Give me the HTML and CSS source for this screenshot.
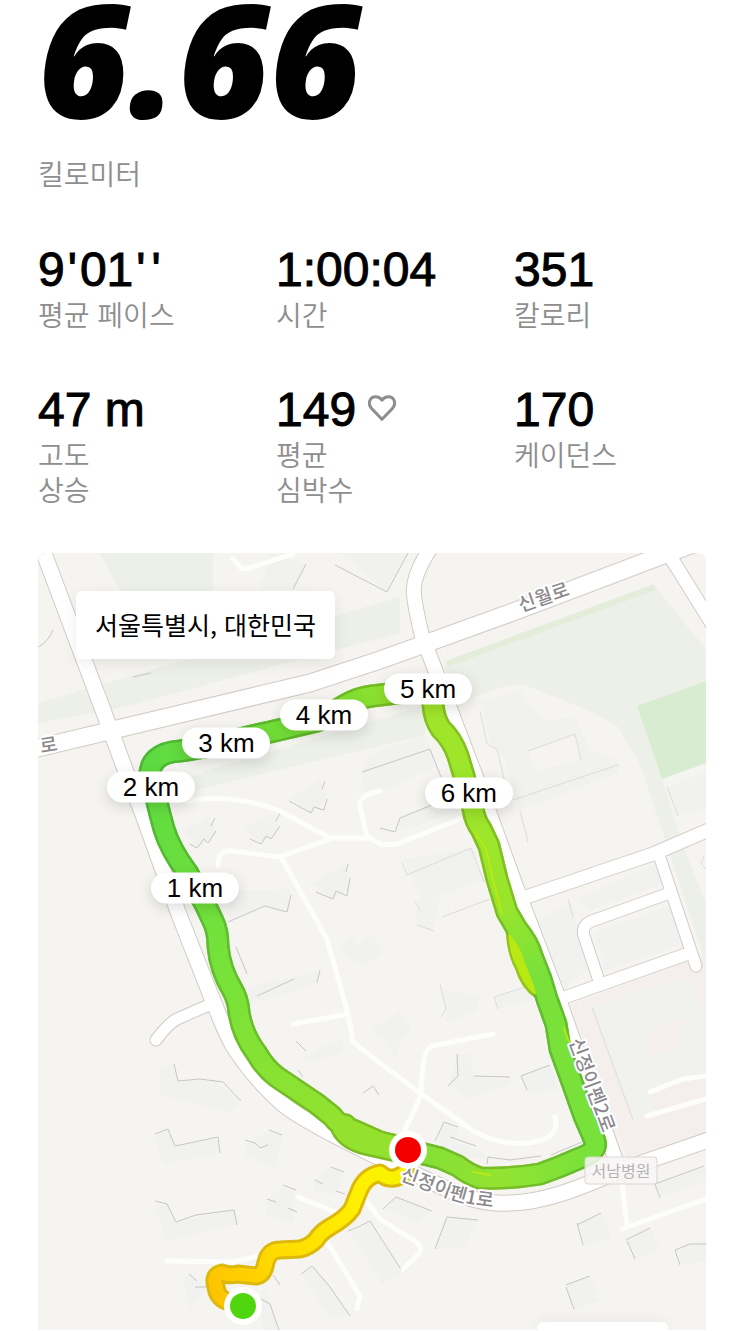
FILE: index.html
```html
<!DOCTYPE html>
<html lang="ko">
<head>
<meta charset="utf-8">
<meta name="viewport" content="width=device-width, initial-scale=1">
<title>러닝 기록</title>
<link rel="stylesheet" href="styles.css">
</head>
<body>
<main class="run">
  <header class="distance">
    <h1 class="distance-value">6.66</h1>
    <p class="label">킬로미터</p>
  </header>

  <section class="stats">
    <div class="stat"><p class="value">9<span class="mark">'</span>01<span class="mark">'</span><span class="mark">'</span></p><p class="label">평균 페이스</p></div>
    <div class="stat"><p class="value">1:00:04</p><p class="label">시간</p></div>
    <div class="stat"><p class="value">351</p><p class="label">칼로리</p></div>
    <div class="stat"><p class="value">47 m</p><p class="label">고도<br>상승</p></div>
    <div class="stat">
      <p class="value value-icon">149
        <svg class="heart" viewBox="0 0 28 26" aria-hidden="true"><path d="M14 24.300 3.600 13.500C-.6 9 1.500 1.700 7.600 1.700c2.800 0 5 1.400 6.400 3.500 1.400-2.100 3.600-3.500 6.400-3.500 6.100 0 8.200 7.300 4 11.800Z"/></svg>
      </p>
      <p class="label">평균<br>심박수</p>
    </div>
    <div class="stat"><p class="value">170</p><p class="label">케이던스</p></div>
  </section>

  <section class="map">
    <svg class="map-art" viewBox="38 554 668 777" role="img" aria-label="러닝 경로">
      <defs>
        <linearGradient id="gLeft" gradientUnits="userSpaceOnUse" x1="150" y1="770" x2="350" y2="1130">
          <stop offset="0" stop-color="#5edb42"/><stop offset=".5" stop-color="#76e239"/><stop offset="1" stop-color="#95e22e"/>
        </linearGradient>
        <linearGradient id="gTop" gradientUnits="userSpaceOnUse" x1="150" y1="750" x2="430" y2="690">
          <stop offset="0" stop-color="#5edb42"/><stop offset=".5" stop-color="#74df36"/><stop offset="1" stop-color="#98e02a"/>
        </linearGradient>
        <linearGradient id="gRight" gradientUnits="userSpaceOnUse" x1="433" y1="700" x2="590" y2="1150">
          <stop offset="0" stop-color="#a0e62a"/><stop offset=".45" stop-color="#9ae52c"/><stop offset=".62" stop-color="#7ae13a"/><stop offset="1" stop-color="#78e13a"/>
        </linearGradient>
        <linearGradient id="gBottom" gradientUnits="userSpaceOnUse" x1="590" y1="1150" x2="408" y2="1151">
          <stop offset="0" stop-color="#78e13a"/><stop offset=".5" stop-color="#93e331"/><stop offset="1" stop-color="#82df36"/>
        </linearGradient>
        <linearGradient id="gStart" gradientUnits="userSpaceOnUse" x1="212" y1="1290" x2="390" y2="1170">
          <stop offset="0" stop-color="#ffc400"/><stop offset=".35" stop-color="#ffdc00"/><stop offset=".8" stop-color="#fff000"/><stop offset="1" stop-color="#f8f200"/>
        </linearGradient>
        <g id="roads">
          <path class="w17" d="M30 751 113 731 310 684 380 661 430 643 513 613 658 558 720 535"/>
          <path class="w15" d="M38 540 45 557 109 727 126 773 142 813 178 913 211 997C222 1023 226 1036 235 1050 247 1068 265 1090 284 1106 300 1119 330 1135 384 1161L447 1190Q480 1206 508 1204 538 1204 580 1188L627 1169 720 1137"/>
          <path class="w11" d="M209 1006 177 1020Q168 1025 156 1041"/>
          <path class="w14" d="M434 540 428 553Q412 579 414 595 415 608 422 637L436 673 473 770 488 810 517 890 556 992 574 1043 616 1162"/>
          <path class="w13" d="M664 546 673 562 714 628"/>
          <path class="w13" d="M520 900 653 855 720 826"/>
          <path class="w11" d="M658 853 692 955 696 967"/>
          <path class="w12" d="M560 1000 687 955"/>
          <path class="w11" d="M599 982 584 937Q581 926 592 922L667 895"/>
        </g>
        <g id="routeGreen">
          <path stroke="url(#gBottom)" d="M594 1140Q600 1152 580 1159 560 1168 540 1175 510 1180 480 1179 468 1175 458 1167L440 1159 408 1151"/>
          <path stroke="url(#gRight)" d="M430 690 433 705Q434 720 441 730 452 740 458 757L464 777 473 810Q475 822 481 830L489 847 497 880 507 913 517 930Q529 945 532 957L541 980 547 1000 556 1025 560 1050 572 1083 584 1117 594 1140"/>
          <path stroke="url(#gTop)" d="M150 780Q148 754 180 752C215 748 235 740 270 733L317 722C335 715 347 700 372 697L430 690"/>
          <path stroke="url(#gLeft)" d="M408 1151 380 1143 353 1131Q340 1128 332 1117L317 1105 277 1078Q265 1069 257 1055 242 1035 239 1013 238 1000 232 990 220 970 218 947 218 932 213 922L205 905 187 873Q170 850 164 830 160 816 157 803L150 775"/>
        </g>
        <path id="bulge" d="M344 1128Q350 1139 368 1143L408 1152"/>
        <path id="routeYellow" d="M238 1304Q218 1304 216 1288 212 1276 222 1274 228 1277 238 1275L256 1277Q264 1276 266 1263 269 1251 280 1251L300 1250Q309 1248 316 1241 320 1234 330 1228 346 1219 352 1210L360 1190Q366 1177 380 1174 391 1185 406 1173"/>
        <path id="labelCurve" d="M385 1176Q418 1187 448 1199 472 1208 520 1210"/>
        <path id="labelSide" d="M569 1042 612 1160"/>
      </defs>

      <rect class="ground" x="38" y="554" width="668" height="777"/>

      <!-- parks and campus areas -->
      <path class="green-soft" d="M100 554H213V592H120ZM38 704 400 598V634L116 710 38 724ZM150 797 205 772 400 714 425 706V736L200 790Z"/>
      <path class="green-soft" d="M445 662 653 585 706 650V965L668 850 640 765 618 728 590 712 525 686 505 687 450 706Z"/>
      <path class="ground" d="M662 780 706 764V905L684 850Z"/>
      <path class="green-line" d="M447 665 655 588"/>
      <path class="green" d="M637 707 706 682V764L662 780Z"/>
      <path class="pink" d="M570 1006 706 955V1133L627 1158Z"/>
      <path class="building" d="M592 1008 642 991 690 977 706 1020V1100L633 1121Z"/>
      <path class="pink" d="M646 1032 682 1020 678 1050 652 1058ZM650 1090 706 1072V1104L656 1117Z"/>

      <!-- building footprints -->
      <path class="building" d="M480 702 520 692 545 722 575 718 590 750 618 762 618 774 520 812 505 760 490 745Z"/>
      <path class="ground" d="M528 752 575 735 581 761 536 772Z"/>
      <path class="building" d="M340 554H408L387 593ZM270 554 306 565 293 590 260 592ZM370 755 425 736 437 768 365 800 362 772Z"/>
      <path class="building" d="M182 832 210 818 216 832 200 850ZM243 828 275 815 280 832 262 845ZM290 800 320 780 327 800 312 815ZM311 884 345 865 350 890 333 900ZM226 892 290 890 288 913 265 907 230 922ZM240 990 318 972 317 985 250 1005Z"/>
      <path class="building" d="M400 820 442 800 460 812 395 833ZM403 860 472 850 482 880 440 897 432 932 415 925 420 895ZM535 920 572 905 588 970 565 990ZM575 900 657 865 662 885 590 912ZM595 933 670 907 682 945 605 972ZM668 788 706 772V810L678 817ZM443 990 480 998 478 1010 447 1024ZM497 998 535 985 541 1000 498 1010ZM320 1048 343 1040 343 1055 300 1063ZM340 945 352 937 358 946 372 936 385 950 376 958 365 967 350 960ZM370 1030 382 1024 400 1012 412 1030 400 1042 395 1060 386 1040Z"/>
      <path class="building" d="M160 1067 174 1065 178 1082 215 1081 240 1102 230 1113 160 1096ZM155 1137 167 1130 175 1147 218 1140 220 1155 163 1165ZM155 1207 167 1206 176 1223 235 1211 237 1225 165 1242ZM245 1147 268 1131 283 1137 275 1168 245 1157ZM312 1183 330 1168 343 1174 336 1196 315 1192ZM267 1202 283 1187 295 1192 293 1224 267 1217Z"/>
      <path class="building" d="M385 1210 398 1198 432 1212 418 1224ZM445 1218 478 1221 465 1248 435 1250ZM578 1224 602 1214 612 1240 583 1246ZM627 1242 650 1229 660 1250 635 1260ZM567 1287 590 1277 600 1302 575 1310ZM676 1250 706 1243V1262L681 1266ZM656 1186 706 1168V1182L660 1198ZM457 1055 470 1055 474 1077 515 1082 470 1100 450 1086ZM438 1140 444 1123 458 1130 455 1143 480 1152 488 1160 450 1158ZM522 1078 550 1066 558 1090 528 1094ZM302 1275 315 1267 350 1315 330 1320ZM350 1233 370 1222 402 1275 382 1285ZM262 1290 270 1300 278 1331H262ZM182 1280 192 1275 205 1290 190 1310Z"/>
      <g class="edge">
        <path d="M306 565 293 590M335 566 387 593 408 554M38 648Q48 643 53 631M133 678 151 674M362 773 380 767 430 750 441 778M380 829 395 833 400 819 432 806"/>
        <path class="thin" d="M480 712 487 745 497 750 507 792M528 752 575 735 581 761M513 801 618 766M520 812 528 843M402 863 407 876 471 849 484 883M415 902 420 912M442 918 490 900M417 926 434 932M667 788 678 817M704 857 701 865 706 870M568 900 573 918M592 1008 633 1121M440 985 446 1010 441 1018M535 985 494 998 498 1010"/>
        <path d="M215 819 211 827M216 832 208 844 204 840 197 849 190 845M280 814 276 822M280 827 271 840 266 837 261 845 250 840M325 782 322 790M327 800 324 811 314 808 311 814 289 802M348 865 346 873M350 879 347 897 336 892 333 900 316 893M228 923 265 907 287 913 291 896M257 997 294 980M317 984 320 971M236 948 247 975"/>
        <path d="M174 1065 178 1082 200 1080 223 1083 241 1102M155 1135 168 1130 175 1147 218 1138 220 1154M155 1202 167 1205 176 1223 196 1216 234 1211 237 1226M245 1141 255 1144 260 1149 268 1146M269 1131 282 1136M331 1168 344 1173M315 1181 323 1185M336 1192 345 1195M283 1186 296 1191M267 1200 276 1203M288 1209 297 1213"/>
        <path d="M383 1210 396 1198 432 1212M435 1250 447 1218 478 1221M577 1226 601 1214M577 1224 583 1246M626 1241 650 1229M627 1242 635 1260M566 1286 590 1277M566 1288 574 1310M675 1251 690 1245 706 1245M675 1251 680 1266M655 1185 704 1167M655 1185 660 1199M448 1087 458 1077 457 1055M474 1077 510 1078M527 1091 521 1077 550 1066M435 1142 444 1123 458 1128M450 1138 476 1147M487 1165 488 1158 510 1161 541 1157M551 1156 582 1143M348 1232 358 1228 370 1222 402 1272M301 1275 312 1267 330 1288 350 1317M261 1300 270 1305 279 1331M273 1276 280 1286M189 1275 197 1282M195 1288H206M298 1071 303 1078M306 1052 296 1042M363 1094 373 1087 379 1096"/>
      </g>

      <g class="paths">
        <path d="M187 802Q233 794 280 812L330 839H370L382 846 397 845 460 820M380 792Q358 796 360 808L367 838M218 867Q218 850 233 852L280 858 330 840M282 860 327 940 348 1015 353 1043 380 1064 417 1092 475 1133Q510 1151 542 1141 560 1134 555 1118M293 1025 348 1015M493 1035 432 1047Q422 1049 421 1095 418 1105 405 1130"/>
        <path d="M167 1262 233 1263 262 1256M233 1263V1280M298 1198 345 1217M365 1200 380 1220 413 1241Q424 1247 419 1255L403 1270M327 1243 360 1297 357 1310M622 1183 627 1227M622 1230 706 1200M233 560 242 570 250 569 293 555M650 1093 683 1080 706 1077M647 1117 706 1100"/>
      </g>

      <use href="#roads" class="road-case"/>
      <use href="#roads" class="road-fill"/>

      <!-- road names that sit under the route -->
      <g class="road-name">
        <text transform="translate(521 613) rotate(-19)">신월로</text>
        <text transform="translate(41 754) rotate(-9)">로</text>
      </g>

      <g class="route">
        <use href="#routeYellow" class="yellow-case"/>
        <use href="#routeYellow" class="yellow-fill"/>
        <path class="lime-case" d="M514 925Q514 951 523 967 528 984 541 993"/>
        <path class="lime-case" d="M550 1018Q561 1035 562 1046"/>
        <use href="#bulge" class="bulge-case"/>
        <use href="#routeGreen" class="green-case"/>
        <use href="#routeGreen" class="green-shade"/>
        <path class="lime-fill" d="M515 925Q514 951 523 966 528 981 537 989"/>
        <use href="#bulge" class="bulge-fill"/>
        <use href="#routeGreen" class="green-fill"/>
        <path class="lime-line" d="M474 832 486 850 494 885 502 915M473 1173 490 1176M564 1029 569 1043"/>
      </g>

      <g class="road-name">
        <text><textPath href="#labelCurve" startOffset="15">신정이펜1로</textPath></text>
        <text><textPath href="#labelSide">신정이펜2로</textPath></text>
      </g>
      <rect class="place-box" x="585" y="1158" width="72" height="27" rx="3"/>
      <text class="place-name" x="621" y="1178">서남병원</text>

      <circle class="dot-ring" cx="408" cy="1151" r="19"/>
      <circle class="dot-end" cx="408" cy="1151" r="13"/>
      <circle class="dot-ring" cx="243" cy="1307" r="19"/>
      <circle class="dot-start" cx="243" cy="1307" r="13"/>
    </svg>

    <p class="place">서울특별시, 대한민국</p>
    <span class="pin" style="left:23.500%;top:43.100%">1 km</span>
    <span class="pin" style="left:16.900%;top:30.100%">2 km</span>
    <span class="pin" style="left:28.200%;top:24.400%">3 km</span>
    <span class="pin" style="left:42.800%;top:20.800%">4 km</span>
    <span class="pin" style="left:58.400%;top:17.500%">5 km</span>
    <span class="pin" style="left:64.500%;top:30.900%">6 km</span>
    <span class="sheet"></span>
  </section>
</main>
</body>
</html>
```
FILE: styles.css
```css
* { box-sizing: border-box; }

body {
  margin: 0;
  background: #fff;
  color: #000;
  font-family: "Liberation Sans", "Noto Sans CJK KR", sans-serif;
}

h1, p { margin: 0; }

.run {
  display: flex;
  flex-direction: column;
  padding: 0 37px 0 38px;
}

.distance {
  display: flex;
  flex-direction: column;
  gap: 44px;
}

.distance-value {
  font-family: "Open Sans", sans-serif;
  font-size: 158px;
  font-style: italic;
  font-weight: 800;
  line-height: 114px;
  height: 112px;
}

.label {
  color: #8e8e8e;
  font-family: "Noto Sans CJK KR", sans-serif;
  font-size: 28px;
  font-weight: 350;
  line-height: 35px;
}

.stats {
  display: grid;
  grid-template-columns: repeat(3, 1fr);
  gap: 53px 46px;
  margin-top: 54px;
}

.stat {
  display: flex;
  flex-direction: column;
  gap: 3px;
}

.value {
  font-size: 48px;
  font-kerning: none;
  line-height: 49px;
  white-space: nowrap;
  -webkit-text-stroke: 1px #000;
}

.value-icon {
  display: flex;
  align-items: center;
  gap: 12px;
}

.mark { padding: 0 3px; }

.heart {
  width: 28px;
  height: 26px;
  margin-bottom: 4px;
  fill: none;
  stroke: #8e8e8e;
  stroke-width: 3;
  stroke-linejoin: round;
}

/* Map */
.map {
  position: relative;
  margin-top: 46px;
  overflow: hidden;
  border-radius: 8px 8px 0 0;
}

.map-art {
  display: block;
  width: 100%;
  height: auto;
}

.ground { fill: #f5f4f0; }
.green-soft { fill: #edf0e9; }
.green { fill: #d7ecd1; }
.green-line { stroke: #e3edda; stroke-width: 6; }
.pink { fill: #f4efed; }
.building { fill: #f1f1f0; }

.edge { fill: none; stroke: #c6c6c6; stroke-width: 1; }
.thin { stroke: #dcdcdc; }

.paths {
  fill: none;
  stroke: #fdfdfc;
  stroke-width: 5;
  stroke-linecap: round;
  stroke-linejoin: round;
}

.road-case, .road-fill {
  fill: none;
  stroke-linecap: round;
  stroke-linejoin: round;
}

.road-case { stroke: #d2cbc7; --case: 2px; }
.road-fill { stroke: #fff; --case: 0px; }
.w17 { stroke-width: calc(17px + var(--case)); }
.w15 { stroke-width: calc(15px + var(--case)); }
.w14 { stroke-width: calc(14px + var(--case)); }
.w13 { stroke-width: calc(13px + var(--case)); }
.w12 { stroke-width: calc(12px + var(--case)); }
.w11 { stroke-width: calc(11px + var(--case)); }

.route {
  fill: none;
  stroke-linecap: round;
  stroke-linejoin: round;
}

.yellow-case { stroke: #dcb90c; stroke-width: 19; }
.yellow-fill { stroke: url(#gStart); stroke-width: 13; }
.green-case { stroke-width: 23; }
.green-shade { stroke-width: 23; filter: brightness(0.83); }
.green-fill { stroke-width: 18; }
.bulge-case { stroke: #7cbb26; stroke-width: 28; }
.bulge-fill { stroke: #93e22f; stroke-width: 23; }
.lime-case { stroke: #92c41c; stroke-width: 17; }
.lime-fill { stroke: #b8e912; stroke-width: 13; }
.lime-line { stroke: #b8e912; stroke-width: 2; }

.road-name, .place-name {
  font-family: "Noto Sans CJK KR", sans-serif;
  font-size: 19px;
}

.road-name {
  fill: #8c888c;
  stroke: #fff;
  stroke-width: 4;
  stroke-linejoin: round;
  paint-order: stroke;
  font-weight: 500;
}

.place-box {
  fill: rgb(248 246 245 / 85%);
  stroke: #dad6d5;
}

.place-name {
  fill: #b5b2b5;
  font-size: 16px;
  text-anchor: middle;
}

.dot-ring { fill: #fff; }
.dot-end { fill: #f50000; }
.dot-start { fill: #50d60f; }

.place {
  position: absolute;
  top: 38px;
  left: 38px;
  padding: 15px 19px 17px;
  border-radius: 6px;
  background: #fff;
  box-shadow: 0 4px 16px rgb(0 0 0 / 8%);
  font-family: "Noto Sans CJK KR", sans-serif;
  font-size: 25px;
  font-weight: 400;
  line-height: 36px;
  white-space: nowrap;
}

.pin {
  position: absolute;
  width: 88px;
  border-radius: 16px;
  background: #fff;
  box-shadow: 0 4px 14px rgb(0 0 0 / 14%);
  font-size: 26px;
  line-height: 31px;
  text-align: center;
  white-space: nowrap;
  transform: translate(-50%, -50%);
}

.sheet {
  position: absolute;
  right: 38px;
  bottom: 0;
  width: 131px;
  height: 8px;
  border-radius: 6px 6px 0 0;
  background: #fff;
  box-shadow: 0 0 14px rgb(0 0 0 / 8%);
}
```
